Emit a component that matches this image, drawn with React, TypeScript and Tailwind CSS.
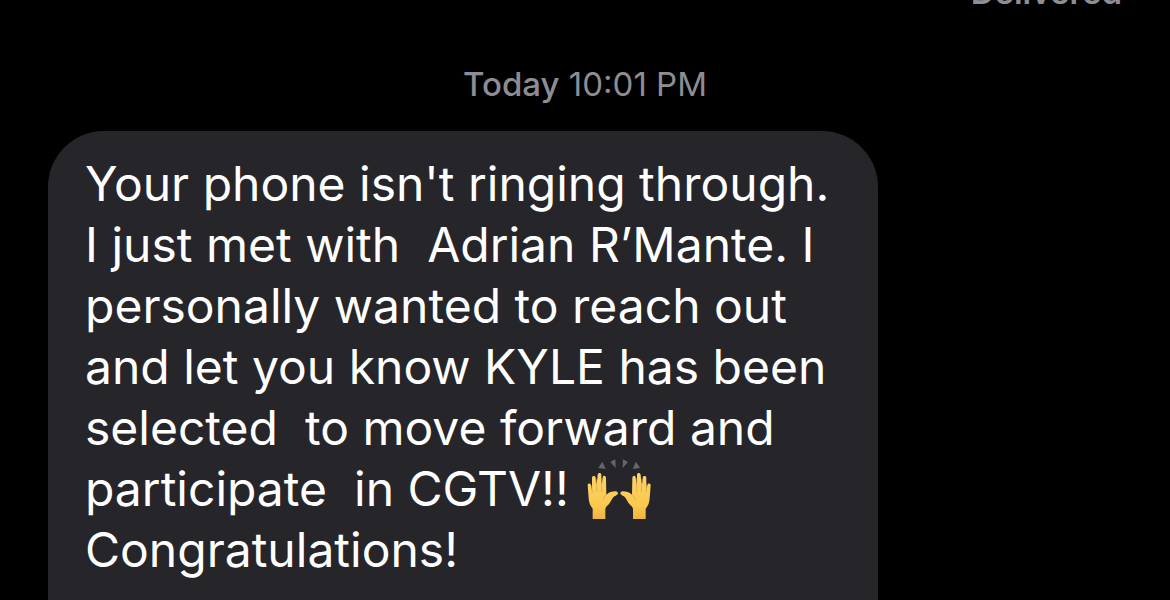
const lines = [
  "Your phone isn't ringing through.",
  'I just met with  Adrian R’Mante. I',
  'personally wanted to reach out',
  'and let you know KYLE has been',
  'selected  to move forward and',
];

const RaisedHands = () => {
  return <svg viewBox="48 24 198 186" className="-my-4 ml-1 inline-block h-[62px] w-[66px] align-[2px]" role="img" aria-label="Raised hands">
      <defs>
        <linearGradient id="skin" gradientUnits="userSpaceOnUse" x1="0" y1="68" x2="0" y2="208">
          <stop offset="0" stopColor="#fbd36c" />
          <stop offset="0.7" stopColor="#fac94f" />
          <stop offset="1" stopColor="#edb340" />
        </linearGradient>
        <g id="hand">
          <path fill="url(#skin)" d="M68 207 L68 176 C60 167 57 158 56 145 L53 106 C53 99 62 98 63 106 L66 120 L66 84 C66 76 77 76 77 84 L79 114 L83 75 C84 67 94 67 94 75 L94 116 L98 82 C99 74 108 76 108 84 L109 134 C117 127 126 124 137 124 C146 126 146 133 137 137 C127 141 125 151 117 162 C112 168 107 170 106 177 L106 207 Z" />
          <path fill="url(#skin)" d="M66 100 L80 100 L97 100 L104 130 L66 135 Z" />
          <path fill="none" stroke="#dfa03a" strokeWidth="2" strokeLinecap="round" d="M65 108 L67 127 M79 88 L81 125 M95 86 L95 125 M109 133 C104 138 101 144 99 149" />
        </g>
        <g id="rays" fill="#66666a">
          <path d="M97 35 L107 57 L85 54 Z" />
          <path d="M121 36 L136 28 L137 54 Z" />
        </g>
      </defs>
      <use href="#hand" />
      <use href="#rays" />
      <use href="#hand" transform="translate(295 0) scale(-1 1)" />
      <use href="#rays" transform="translate(295 0) scale(-1 1)" />
    </svg>;
};

const App = () => {
  return <main className="h-screen overflow-hidden bg-black font-['Inter',sans-serif]">
      <p className="-mt-6 pr-12 text-right text-[33px] leading-8 font-semibold text-[#8d8d93]">Delivered</p>
      <p className="mt-14 text-center text-[33px] leading-10 text-[#8d8d93]">
        <span className="font-medium">Today</span> 10:01 PM
      </p>
      <div className="mt-[27px] mr-[25%] ml-12 rounded-t-[56px] bg-[#26252a] px-[37px] pt-[22px] pb-16 text-[48px] leading-[61px] whitespace-pre text-white">
        {lines.map((line) => <p key={line}>{line}</p>)}
        <p>participate  in CGTV!! <RaisedHands /></p>
        <p>Congratulations!</p>
      </div>
    </main>;
};
export default App;
